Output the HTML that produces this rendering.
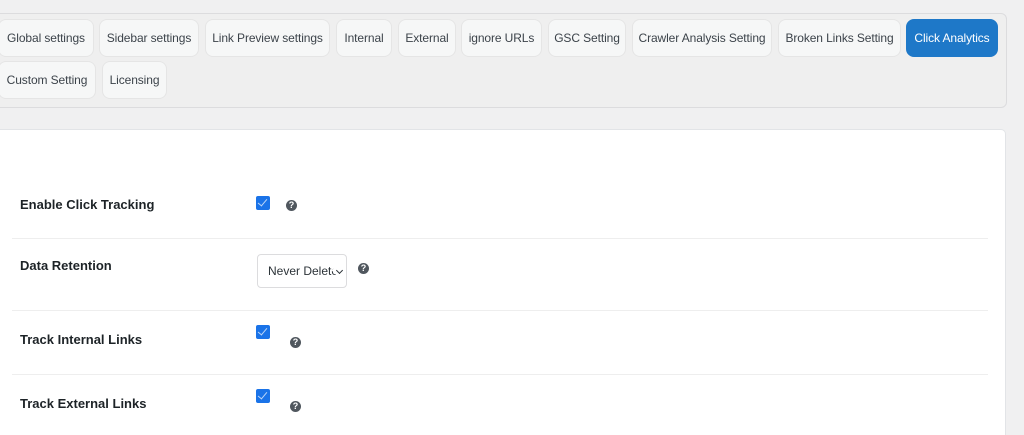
<!DOCTYPE html>
<html><head><style>
*{margin:0;padding:0;box-sizing:border-box}
html,body{width:1024px;height:435px;overflow:hidden}
body{background:#f0f0f1;font-family:"Liberation Sans",sans-serif;position:relative;color:#1d2327}
.box{position:absolute;left:-10px;top:13px;width:1017px;height:95px;border:1px solid #dcdcde;border-radius:6px;background:#efefef}
.tab{position:absolute;height:38px;background:#f6f7f7;border:1px solid #e5e5e5;border-radius:8px;font-size:12px;color:#3c434a;line-height:36px;text-align:center;white-space:nowrap;letter-spacing:-0.1px}
.tab.on{background:#1e78c8;border-color:#1e78c8;color:#fff}
.card{position:absolute;left:-10px;top:129px;width:1016px;height:306px;background:#fff;border:1px solid #e2e4e7;border-bottom:none;border-radius:5px 5px 0 0}
.lbl{position:absolute;left:20px;font-size:13px;font-weight:bold;color:#1d2327}
.cb{position:absolute;left:256px;width:14px;height:14px;background:#1a73e8;border-radius:2px}
.cb:after{content:"";position:absolute;left:4px;top:1px;width:4px;height:8px;border:solid #bcd6f7;border-width:0 1.5px 1.5px 0;transform:rotate(40deg)}
.hp{position:absolute;width:11px;height:11px;border-radius:50%;background:#50575e;color:#fff;font-size:9px;font-weight:bold;line-height:11px;text-align:center}
.sep{position:absolute;left:12px;width:976px;height:1px;background:#eeeeee}
.sel{position:absolute;left:257px;top:254px;width:90px;height:34px;border:1px solid #dcdcde;border-radius:4px;font-size:12px;color:#2c3338;line-height:32px;padding-left:10px;white-space:nowrap;overflow:hidden;background:#fff}
.sel i{position:absolute;right:4px;top:13px;width:5px;height:5px;border:solid #2c3338;border-width:0 1.5px 1.5px 0;transform:rotate(45deg);background:#fff;box-shadow:0 0 0 3px #fff}
</style></head><body>
<div class="box"></div>
<div class="tab" style="left:-2px;top:19px;width:96px">Global settings</div>
<div class="tab" style="left:99px;top:19px;width:100px">Sidebar settings</div>
<div class="tab" style="left:205px;top:19px;width:125px">Link Preview settings</div>
<div class="tab" style="left:336px;top:19px;width:56px">Internal</div>
<div class="tab" style="left:398px;top:19px;width:58px">External</div>
<div class="tab" style="left:461px;top:19px;width:81px">ignore URLs</div>
<div class="tab" style="left:548px;top:19px;width:78px">GSC Setting</div>
<div class="tab" style="left:632px;top:19px;width:140px">Crawler Analysis Setting</div>
<div class="tab" style="left:778px;top:19px;width:123px">Broken Links Setting</div>
<div class="tab on" style="left:906px;top:19px;width:92px">Click Analytics</div>
<div class="tab" style="left:-2px;top:61px;width:98px">Custom Setting</div>
<div class="tab" style="left:102px;top:61px;width:65px">Licensing</div>
<div class="card"></div>
<div class="lbl" style="top:197px">Enable Click Tracking</div>
<div class="cb" style="top:196px"></div>
<div class="hp" style="left:286px;top:200px">?</div>
<div class="sep" style="top:238px"></div>
<div class="lbl" style="top:258px">Data Retention</div>
<div class="sel">Never Delete<i></i></div>
<div class="hp" style="left:358px;top:263px">?</div>
<div class="sep" style="top:310px"></div>
<div class="lbl" style="top:332px">Track Internal Links</div>
<div class="cb" style="top:325px"></div>
<div class="hp" style="left:290px;top:337px">?</div>
<div class="sep" style="top:374px"></div>
<div class="lbl" style="top:396px">Track External Links</div>
<div class="cb" style="top:389px"></div>
<div class="hp" style="left:290px;top:401px">?</div>
</body></html>
